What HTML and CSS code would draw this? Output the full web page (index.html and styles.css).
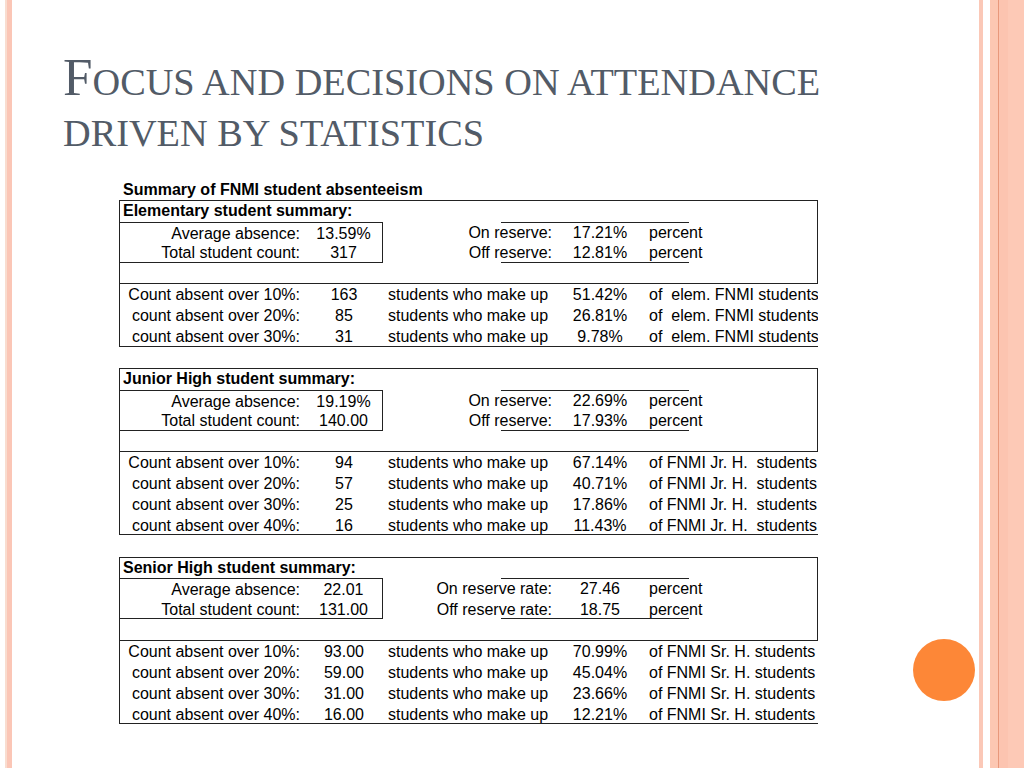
FILE: index.html
```html
<!DOCTYPE html>
<html>
<head>
<meta charset="utf-8">
<link rel="stylesheet" href="styles.css">
</head>
<body>
<div class="slide">
  <h1 class="title"><span class="cap">F</span>ocus and decisions on attendance<br>driven by statistics</h1>
  <div class="sheet">
    <div class="caption">Summary of FNMI student absenteeism</div>

    <div class="section">
      <div class="grid top">
        <div class="head">Elementary student summary:</div>
        <div class="rline r2"></div>
        <div class="lab r2 ib-t">Average absence:</div>
        <div class="val r2 ib-t ib-r">13.59%</div>
        <div class="rlab r2">On reserve:</div>
        <div class="rval r2">17.21%</div>
        <div class="unit r2">percent</div>
        <div class="lab r3 ib-b">Total student count:</div>
        <div class="val r3 ib-b ib-r">317</div>
        <div class="rlab r3">Off reserve:</div>
        <div class="rval r3">12.81%</div>
        <div class="unit r3">percent</div>
        <div class="blank r4"></div>
      </div>
      <div class="grid bottom">
        <div class="lab">Count absent over 10%:</div><div class="val">163</div><div class="desc">students who make up</div><div class="rval">51.42%</div><div class="of">of  elem. FNMI students</div>
        <div class="lab">count absent over 20%:</div><div class="val">85</div><div class="desc">students who make up</div><div class="rval">26.81%</div><div class="of">of  elem. FNMI students</div>
        <div class="lab">count absent over 30%:</div><div class="val">31</div><div class="desc">students who make up</div><div class="rval">9.78%</div><div class="of">of  elem. FNMI students</div>
      </div>
    </div>

    <div class="section">
      <div class="grid top">
        <div class="head">Junior High student summary:</div>
        <div class="rline r2"></div>
        <div class="lab r2 ib-t">Average absence:</div>
        <div class="val r2 ib-t ib-r">19.19%</div>
        <div class="rlab r2">On reserve:</div>
        <div class="rval r2">22.69%</div>
        <div class="unit r2">percent</div>
        <div class="lab r3 ib-b">Total student count:</div>
        <div class="val r3 ib-b ib-r">140.00</div>
        <div class="rlab r3">Off reserve:</div>
        <div class="rval r3">17.93%</div>
        <div class="unit r3">percent</div>
        <div class="blank r4"></div>
      </div>
      <div class="grid bottom">
        <div class="lab">Count absent over 10%:</div><div class="val">94</div><div class="desc">students who make up</div><div class="rval">67.14%</div><div class="of">of FNMI Jr. H.  students</div>
        <div class="lab">count absent over 20%:</div><div class="val">57</div><div class="desc">students who make up</div><div class="rval">40.71%</div><div class="of">of FNMI Jr. H.  students</div>
        <div class="lab">count absent over 30%:</div><div class="val">25</div><div class="desc">students who make up</div><div class="rval">17.86%</div><div class="of">of FNMI Jr. H.  students</div>
        <div class="lab">count absent over 40%:</div><div class="val">16</div><div class="desc">students who make up</div><div class="rval">11.43%</div><div class="of">of FNMI Jr. H.  students</div>
      </div>
    </div>

    <div class="section">
      <div class="grid top">
        <div class="head">Senior High student summary:</div>
        <div class="rline r2"></div>
        <div class="lab r2 ib-t">Average absence:</div>
        <div class="val r2 ib-t ib-r">22.01</div>
        <div class="rlab r2">On reserve rate:</div>
        <div class="rval r2">27.46</div>
        <div class="unit r2">percent</div>
        <div class="lab r3 ib-b">Total student count:</div>
        <div class="val r3 ib-b ib-r">131.00</div>
        <div class="rlab r3">Off reserve rate:</div>
        <div class="rval r3">18.75</div>
        <div class="unit r3">percent</div>
        <div class="blank r4"></div>
      </div>
      <div class="grid bottom">
        <div class="lab">Count absent over 10%:</div><div class="val">93.00</div><div class="desc">students who make up</div><div class="rval">70.99%</div><div class="of">of FNMI Sr. H. students</div>
        <div class="lab">count absent over 20%:</div><div class="val">59.00</div><div class="desc">students who make up</div><div class="rval">45.04%</div><div class="of">of FNMI Sr. H. students</div>
        <div class="lab">count absent over 30%:</div><div class="val">31.00</div><div class="desc">students who make up</div><div class="rval">23.66%</div><div class="of">of FNMI Sr. H. students</div>
        <div class="lab">count absent over 40%:</div><div class="val">16.00</div><div class="desc">students who make up</div><div class="rval">12.21%</div><div class="of">of FNMI Sr. H. students</div>
      </div>
    </div>
  </div>
  <div class="dot"></div>
</div>
</body>
</html>
```

FILE: styles.css
```css
html, body {
  margin: 0;
  padding: 0;
  background: #fff;
}

.slide {
  position: relative;
  width: 1024px;
  height: 768px;
  overflow: hidden;
  background: linear-gradient(to right,
    #ffffff 0 5px,
    #f9ddd0 5px 7px,
    #fbc6b6 7px 12px,
    #ffffff 12px 979px,
    #fbc8b7 979px 983px,
    #ffffff 983px 990px,
    #fcc7b2 990px 998px,
    #e8987b 998px 999px,
    #fcc4b0 999px 1008px,
    #fdc9b6 1008px 1024px);
}

.title {
  margin: 0;
  padding: 57px 0 0 63px;
  font-family: "Liberation Serif", "Times New Roman", serif;
  font-weight: normal;
  text-transform: uppercase;
  font-size: 38.3px;
  line-height: 51px;
  color: #525b67;
  white-space: nowrap;
}

.cap {
  font-size: 53px;
  line-height: 41px;
}

.sheet {
  margin: 20px 0 0 119px;
  width: 699px;
  font-family: "Liberation Sans", Arial, sans-serif;
  font-size: 16px;
  color: #000;
}

.caption {
  height: 21px;
  line-height: 21px;
  font-weight: bold;
  padding-left: 4px;
}

.section {
  border-left: 1px solid #222;
  border-bottom: 1px solid #222;
  margin-bottom: 21.5px;
}

.grid {
  display: grid;
  grid-template-columns: 185px 78px 118px 54px 90px 44px 1fr;
  grid-auto-rows: 20.5px;
  line-height: 20.5px;
  white-space: nowrap;
}

.bottom > div,
.r2,
.r3 {
  padding-top: 1px;
}

.bottom > div:nth-child(n+6) { padding-top: 1.5px; }
.bottom > div:nth-child(n+11) { padding-top: 2px; }
.bottom > div:nth-child(n+16) { padding-top: 2.5px; }

.top {
  border-top: 1px solid #222;
  border-right: 1px solid #222;
  border-bottom: 1px solid #222;
}

.head {
  grid-column: 1 / 8;
  grid-row: 1;
  font-weight: bold;
  padding-left: 3px;
}

.r2 { grid-row: 2; }
.r3 { grid-row: 3; }
.r4 { grid-row: 4; }

.blank { grid-column: 1 / 8; }

.lab {
  grid-column: 1;
  text-align: right;
  padding-right: 5px;
}

.val {
  grid-column: 2;
  text-align: center;
}

.ib-t { border-top: 1px solid #222; line-height: 19.5px; }
.ib-b { border-bottom: 1px solid #222; line-height: 19.5px; }
.ib-r { border-right: 1px solid #222; }

.rline {
  grid-column: 4 / 7;
  grid-row: 2 / 4;
  border-top: 1px solid #222;
  border-bottom: 1px solid #222;
  padding-top: 0;
}

.rlab {
  grid-column: 3 / 5;
  text-align: right;
  padding-right: 3px;
}

.rval {
  grid-column: 5;
  text-align: center;
}

.unit {
  grid-column: 6 / 8;
  padding-left: 4px;
}

.desc {
  grid-column: 3 / 5;
  padding-left: 5px;
}

.of {
  grid-column: 6 / 8;
  padding-left: 4px;
  white-space: pre;
  overflow: hidden;
}

.dot {
  position: absolute;
  left: 913px;
  top: 639px;
  width: 62px;
  height: 62px;
  border-radius: 50%;
  background: #fd8737;
}
```
